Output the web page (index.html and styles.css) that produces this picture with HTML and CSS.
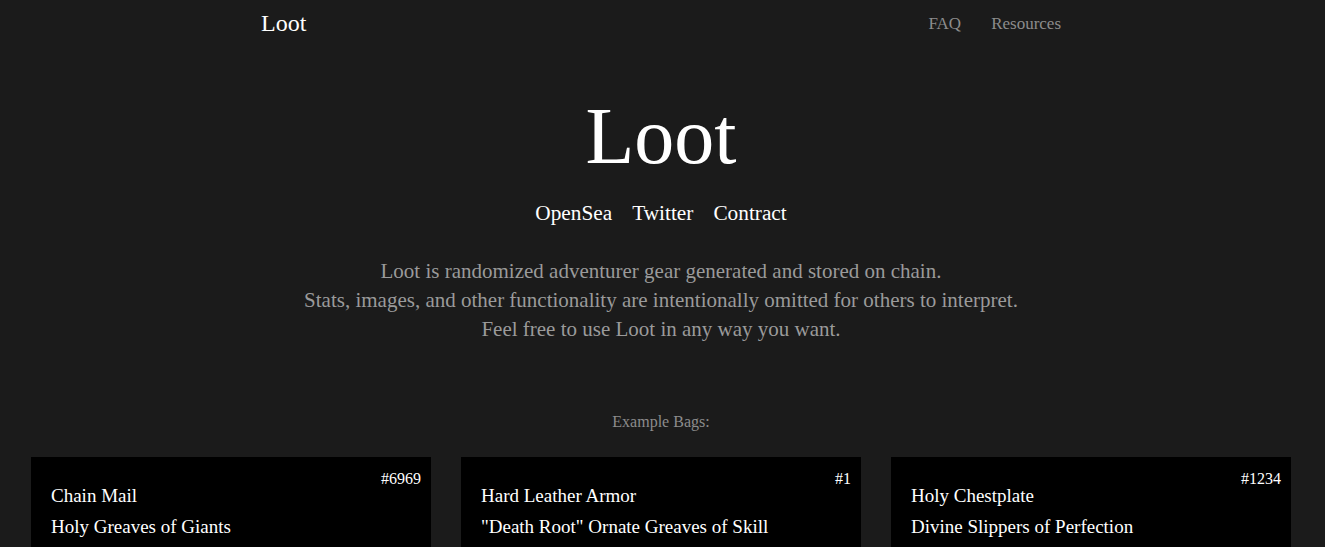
FILE: index.html
```html
<!DOCTYPE html>
<html lang="en">
<head>
<meta charset="utf-8">
<title>Loot</title>
<link rel="stylesheet" href="styles.css">
</head>
<body>
<div class="page">
  <nav class="nav">
    <a class="brand" href="#">Loot</a>
    <div class="nav-links">
      <a href="#">FAQ</a>
      <a href="#">Resources</a>
    </div>
  </nav>

  <header class="hero">
    <h1 class="title">Loot</h1>
    <div class="links">
      <a href="#">OpenSea</a>
      <a href="#">Twitter</a>
      <a href="#">Contract</a>
    </div>
    <p class="desc">Loot is randomized adventurer gear generated and stored on chain.<br>Stats, images, and other functionality are intentionally omitted for others to interpret.<br>Feel free to use Loot in any way you want.</p>
  </header>

  <section class="examples">
    <p class="examples-label">Example Bags:</p>
    <div class="bags">
      <div class="bag">
        <span class="bag-id">#6969</span>
        <ul class="items">
          <li>Chain Mail</li>
          <li>Holy Greaves of Giants</li>
        </ul>
      </div>
      <div class="bag">
        <span class="bag-id">#1</span>
        <ul class="items">
          <li>Hard Leather Armor</li>
          <li>"Death Root" Ornate Greaves of Skill</li>
        </ul>
      </div>
      <div class="bag">
        <span class="bag-id">#1234</span>
        <ul class="items">
          <li>Holy Chestplate</li>
          <li>Divine Slippers of Perfection</li>
        </ul>
      </div>
    </div>
  </section>
</div>
</body>
</html>
```

FILE: styles.css
```css
* { box-sizing: border-box; }

html, body {
  margin: 0;
  padding: 0;
  background: #1b1b1b;
  color: #ffffff;
  font-family: "Liberation Serif", "Times New Roman", serif;
  height: 100%;
  overflow: hidden;
}

a { color: inherit; text-decoration: none; }

.page {
  padding-right: 3px;
}

.nav {
  max-width: 800px;
  margin: 0 auto;
  height: 46px;
  padding-top: 1px;
  display: flex;
  align-items: center;
  justify-content: space-between;
}

.brand {
  font-size: 24px;
  color: #ffffff;
}

.nav-links {
  display: flex;
  gap: 30px;
  font-size: 17px;
  color: #8c8c8c;
  padding-top: 1px;
}

.hero {
  text-align: center;
  margin-top: 50px;
}

.title {
  margin: 0;
  font-size: 80px;
  font-weight: normal;
  line-height: 80px;
}

.links {
  margin-top: 24px;
  display: flex;
  justify-content: center;
  gap: 20px;
  font-size: 21.3px;
  line-height: 26px;
}

.desc {
  margin: 31px 0 0;
  font-size: 21px;
  line-height: 29px;
  color: #9a9a9a;
}

.examples {
  margin-top: 68px;
}

.examples-label {
  margin: 0;
  text-align: center;
  font-size: 16px;
  line-height: 20px;
  color: #8c8c8c;
}

.bags {
  margin: 25px auto 0;
  display: grid;
  grid-template-columns: repeat(3, 400px);
  gap: 30px;
  justify-content: center;
}

.bag {
  position: relative;
  background: #000000;
  padding: 23px 20px 20px;
  min-height: 160px;
}

.bag-id {
  position: absolute;
  top: 13px;
  right: 10px;
  font-size: 16px;
}

.items {
  list-style: none;
  margin: 0;
  padding: 0;
  font-size: 19px;
  line-height: 31px;
}
```
